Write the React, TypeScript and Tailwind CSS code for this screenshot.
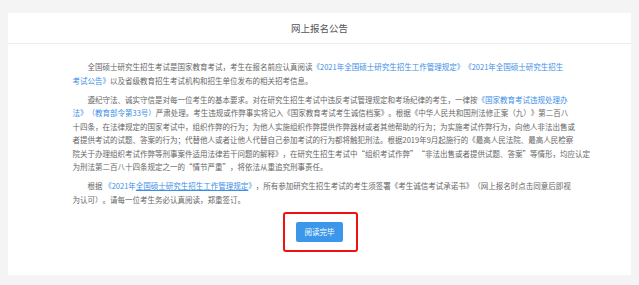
const link = "text-[#3a8ee6]";

export default function App() {
  return (
    <div className="min-h-[285px] bg-[#f4f4f4] px-2 pt-[13px] pb-2 font-['Noto_Sans_CJK_SC','Noto_Sans',sans-serif]">
      <div className="bg-white">
        <div className="flex h-[31px] items-center justify-center border-b border-[#ececec] text-[9.5px] text-[#555]">
          网上报名公告
        </div>

        <div className="flex flex-col items-center pt-4 pb-[33px]">
          <div className="w-[494px] whitespace-nowrap text-[7.5px] text-[#666] [text-spacing-trim:space-all]">
            <p className="mb-[5.5px] indent-[2em] leading-[13.5px]">
              全国硕士研究生招生考试是国家教育考试，考生在报名前应认真阅读
              <span className={link}>《2021年全国硕士研究生招生工作管理规定》</span>
              <span className={link}>
                《2021年全国硕士研究生招生
                <br />
                考试公告》
              </span>
              以及省级教育招生考试机构和招生单位发布的相关招考信息。
            </p>

            <p className="mb-[5.5px] indent-[2em] leading-[13.5px]">
              遵纪守法、诚实守信是对每一位考生的基本要求。对在研究生招生考试中违反考试管理规定和考场纪律的考生，一律按
              <span className={link}>
                《国家教育考试违规处理办
                <br />
                法》（教育部令第33号）
              </span>
              严肃处理。考生违规或作弊事实将记入《国家教育考试考生诚信档案》。根据《中华人民共和国刑法修正案（九）》第二百八
              <br />
              十四条，在法律规定的国家考试中，组织作弊的行为；为他人实施组织作弊提供作弊器材或者其他帮助的行为；为实施考试作弊行为，向他人非法出售或
              <br />
              者提供考试的试题、答案的行为；代替他人或者让他人代替自己参加考试的行为都将触犯刑法。根据2019年9月起施行的《最高人民法院、最高人民检察
              <br />
              院关于办理组织考试作弊等刑事案件适用法律若干问题的解释》，在研究生招生考试中“组织考试作弊”“非法出售或者提供试题、答案”等情形，均应认定
              <br />
              为刑法第二百八十四条规定之一的“情节严重”，将依法从重追究刑事责任。
            </p>

            <p className="indent-[2em] leading-[13.5px]">
              根据 <span className={link}>
                《2021年<span className="underline decoration-[0.5px] underline-offset-1">全国硕士研究生招生工作管理规定</span>》
              </span>
              ，所有参加研究生招生考试的考生须签署《考生诚信考试承诺书》（网上报名时点击同意后即视
              <br />
              为认可）。请每一位考生务必认真阅读，郑重签订。
            </p>
          </div>

          <div className="relative mt-4">
            <button className="block h-5 w-[47px] rounded-[2px] bg-[#3c97ea] text-[7.5px] text-white">
              阅读完毕
            </button>
            <div className="pointer-events-none absolute -top-[10px] -bottom-[10px] -left-[13px] -right-[15px] rounded-[3px] border-2 border-[#f01010]" />
          </div>
        </div>
      </div>
    </div>
  );
}
